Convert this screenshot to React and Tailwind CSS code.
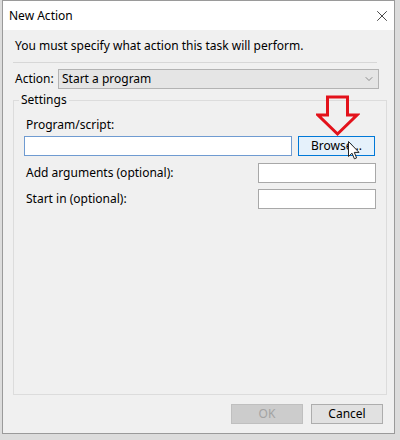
import { ChevronDown, X } from 'lucide-react';

function TextBox({ className }) {
  return <div className={`h-[20px] bg-white border ${className}`} />;
}

function Btn({ children, className }) {
  return (
    <div className={`w-[72px] h-[20px] flex items-center justify-center border text-[12px] ${className}`}>
      {children}
    </div>
  );
}

export default function App() {
  return (
    <div
      className="relative w-[400px] h-[440px] bg-[#dcdcdc] overflow-hidden text-black"
      style={{ fontFamily: '"Noto Sans", "Liberation Sans", sans-serif' }}
    >
      <div className="ml-[2px] w-[393px] h-[434px] flex flex-col border border-[#9a9a9a] bg-[#f0f0f0]">
        {/* title bar */}
        <div className="h-[29px] bg-white flex items-center justify-between pl-[6px] pr-[3px] shrink-0">
          <span className="text-[12px]">New Action</span>
          <X size={18} strokeWidth={1.1} className="text-[#222]" />
        </div>

        <div className="flex flex-col px-[10px]">
          <div className="pl-[2px] mt-[8px] h-[16px] text-[12px] leading-[16px]">
            You must specify what action this task will perform.
          </div>
          <div className="mt-[8px] h-px bg-[#d7d7d7] mr-[7px]" />

          <div className="mt-[6px] flex items-center h-[20px]">
            <span className="w-[45px] pl-[2px] text-[12px]">Action:</span>
            <div className="w-[321px] h-[20px] flex items-center justify-between border border-[#b3b3b3] bg-[#e5e5e5] pl-[3px] pr-[3px]">
              <span className="text-[12px]">Start a program</span>
              <ChevronDown size={12} strokeWidth={1.4} className="text-[#666]" />
            </div>
          </div>

          <fieldset className="mt-[4px] mr-[6px] h-[302px] border border-[#dcdcdc]">
            <legend className="ml-[5px] px-[2px] text-[12px] leading-[14px]">Settings</legend>
            <div className="px-[10px]">
              <div className="mt-[10px] text-[12px] leading-[16px] pl-[2px]">Program/script:</div>
              <div className="mt-[3px] flex items-center">
                <TextBox className="w-[268px] border-[#6f9bd1]" />
                <Btn className="ml-[6px] w-[77px] bg-[#e5f1fb] border-[#0078d7]">Browse...</Btn>
              </div>
              <div className="mt-[7px] flex items-center">
                <span className="w-[234px] text-[12px] pl-[2px]">Add arguments (optional):</span>
                <TextBox className="w-[118px] border-[#a8a8a8]" />
              </div>
              <div className="mt-[6px] flex items-center">
                <span className="w-[234px] text-[12px] pl-[2px]">Start in (optional):</span>
                <TextBox className="w-[118px] border-[#a8a8a8]" />
              </div>
            </div>
          </fieldset>

          <div className="mt-[9px] flex justify-end gap-[8px] pr-[1px]">
            <Btn className="bg-[#cccccc] border-[#bfbfbf] text-[#a3a3a3]">OK</Btn>
            <Btn className="bg-[#e1e1e1] border-[#adadad]">Cancel</Btn>
          </div>
        </div>
      </div>

      {/* red annotation arrow */}
      <svg className="absolute left-[316px] top-[95px]" width="44" height="42" viewBox="0 0 44 42">
        <path
          d="M11.5 2 H31.5 V20 H41 L21.5 39 L2 20 H11.5 Z"
          fill="none"
          stroke="#e3121b"
          strokeWidth="3"
          strokeLinejoin="miter"
        />
      </svg>

      {/* mouse pointer */}
      <svg className="absolute left-[348px] top-[141px]" width="12" height="19" viewBox="0 0 12 19">
        <path
          d="M0.5 0.5 V15.5 L4 12.2 L6.4 17.8 L8.6 16.9 L6.3 11.4 H11 Z"
          fill="#fff"
          stroke="#222"
          strokeWidth="1"
          strokeLinejoin="round"
        />
      </svg>
    </div>
  );
}
